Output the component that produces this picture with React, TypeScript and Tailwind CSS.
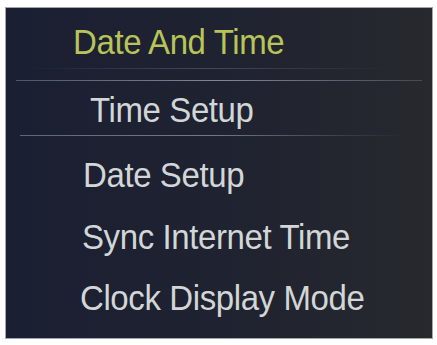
import React from "react";

const rowText = "text-[33px] leading-[40px] tracking-[-0.4px] text-[#d2d6d6] whitespace-nowrap origin-bottom scale-y-[1.06]";

export default function App() {
  return (
    <div className="w-[437px] h-[345px] bg-white pt-[7px] pl-[5px]" style={{ fontFamily: '"Liberation Sans", Arial, sans-serif' }}>
      <div className="w-[428px] h-[332px] border border-[#a4a6aa] bg-gradient-to-r from-[#1b1f33] via-[#1f2230] to-[#27292e] flex flex-col overflow-hidden">
        <div className="pt-[16px] pl-[67px] text-[33px] leading-[40px] tracking-[-0.4px] text-[#b8c358] whitespace-nowrap origin-bottom scale-y-[1.06]">
          Date And Time
        </div>
        <div className="mt-[4px] ml-[20px] mr-[40px] h-[1px] bg-gradient-to-r from-transparent via-[#434860] to-transparent" />
        <div className="mt-[11px] ml-[10px] mr-[10px] h-[1px] bg-gradient-to-r from-[#505666] via-[#80869a] to-[#44485a]" />
        <div className={`mt-[11px] pl-[84px] ${rowText}`}>Time Setup</div>
        <div className="mt-[3px] ml-[14px] mr-[30px] h-[1px] bg-gradient-to-r from-[#606676] via-[#737989] to-transparent" />
        <div className={`mt-[21px] pl-[77px] ${rowText}`}>Date Setup</div>
        <div className={`mt-[22px] pl-[76px] ${rowText}`}>Sync Internet Time</div>
        <div className={`mt-[21px] pl-[74px] ${rowText}`}>Clock Display Mode</div>
      </div>
    </div>
  );
}
